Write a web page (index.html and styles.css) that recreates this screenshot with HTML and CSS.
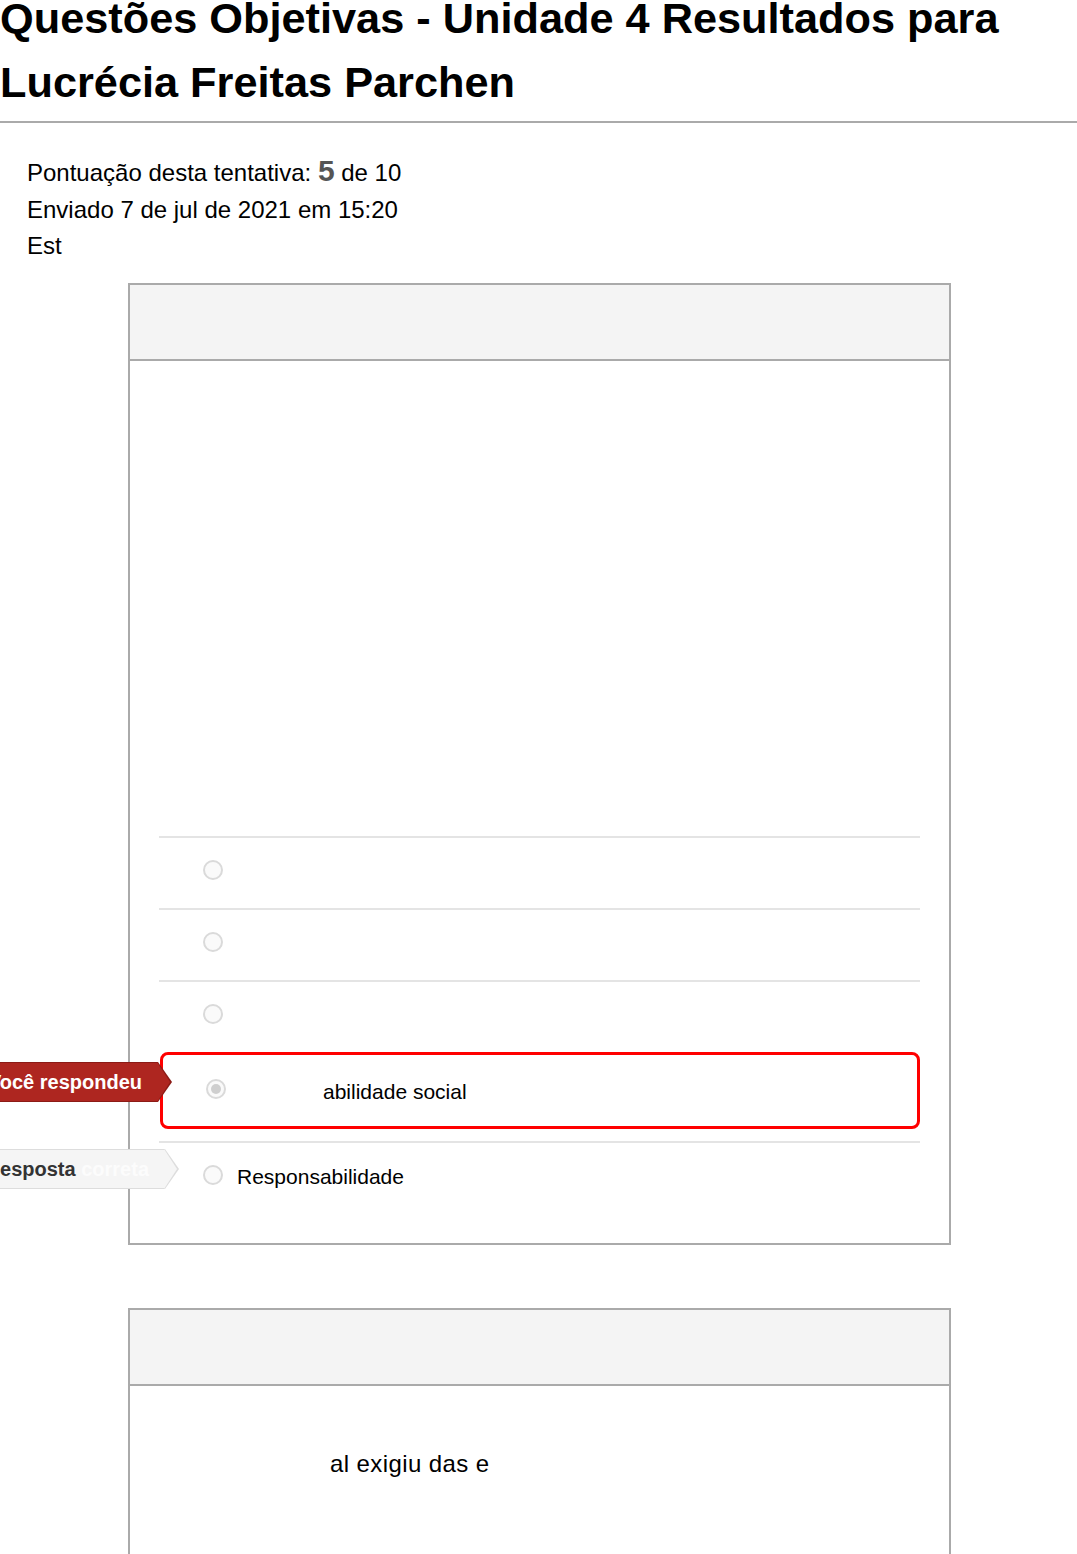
FILE: index.html
```html
<!DOCTYPE html>
<html lang="pt-BR">
<head>
    <meta charset="UTF-8">
    <meta name="viewport" content="width=device-width, initial-scale=1.0">
    <title>Questões Objetivas - Unidade 4 Resultados</title>
    <link rel="stylesheet" href="styles.css">
</head>
<body>

    <h1 class="page-title">Questões Objetivas - Unidade 4 Resultados para Lucrécia Freitas Parchen</h1>

    <div class="quiz-info">
        <div class="info-line score-line">Pontuação desta tentativa: <span class="score">5</span> de 10</div>
        <div class="info-line">Enviado 7 de jul de 2021 em 15:20</div>
        <div class="info-line">Est</div>
    </div>

    <div class="question-card">
        <div class="card-header"></div>
        <div class="card-body">
            <div class="question-text"></div>
            <div class="answers">
                <div class="answer">
                    <span class="radio"></span>
                </div>
                <div class="answer">
                    <span class="radio"></span>
                </div>
                <div class="answer">
                    <span class="radio"></span>
                </div>
                <div class="answer selected">
                    <span class="tag tag-you">Você respondeu</span>
                    <span class="radio checked"></span>
                    <span class="answer-text shifted">abilidade social</span>
                </div>
                <div class="answer last">
                    <span class="tag tag-correct">Resposta <span class="faint">correta</span></span>
                    <span class="radio"></span>
                    <span class="answer-text">Responsabilidade</span>
                </div>
            </div>
        </div>
    </div>

    <div class="question-card next-card">
        <div class="card-header"></div>
        <div class="card-body">
            <p class="question-para">al exigiu das e</p>
        </div>
    </div>

</body>
</html>
```

FILE: styles.css
```css
/* General */
body {
    margin: 0;
    font-family: "Liberation Sans", Arial, sans-serif;
    color: #000;
    background: #fff;
    overflow-x: hidden;
}

.page-title {
    margin: -14px 0 0;
    padding: 0 0 7px;
    font-size: 43.3px;
    line-height: 64px;
    font-weight: bold;
    border-bottom: 2px solid #aaaaaa;
}

/* Quiz info */
.quiz-info {
    padding: 28px 0 0 27px;
    font-size: 24px;
}

.info-line {
    line-height: 36px;
}

.score-line {
    line-height: 39px;
}

.score {
    font-size: 30px;
    font-weight: bold;
    color: #555;
}

/* Question cards */
.question-card {
    box-sizing: border-box;
    width: 823px;
    margin: 19px 0 0 128px;
    border: 2px solid #aaaaaa;
}

.next-card {
    margin-top: 63px;
}

.card-header {
    height: 74px;
    background: #f4f4f4;
    border-bottom: 2px solid #aaaaaa;
}

.card-body {
    padding: 0 29px 32px;
}

.question-text {
    height: 475px;
}

.answer {
    position: relative;
    box-sizing: border-box;
    height: 72px;
    padding: 22px 0 0 44px;
    display: flex;
    align-items: flex-start;
    border-top: 2px solid #e4e4e4;
    font-size: 21px;
}

.answer.selected {
    height: 77px;
    margin-left: 1px;
    padding: 24px 0 0 43px;
    border: 3px solid #ff0000;
    border-radius: 8px;
}

.answer.last {
    margin-top: 12px;
    height: 70px;
}

.radio {
    box-sizing: border-box;
    flex: none;
    width: 20px;
    height: 20px;
    border: 2px solid #dadada;
    border-radius: 50%;
    background: #fafafa;
    display: flex;
    align-items: center;
    justify-content: center;
}

.radio.checked::after {
    content: "";
    width: 10px;
    height: 10px;
    border-radius: 50%;
    background: #cfcfcf;
}

.answer-text {
    margin-left: 14px;
    line-height: 24px;
}

.answer-text.shifted {
    margin-left: 97px;
    margin-top: 1px;
}

/* Answer tags */
.tag {
    position: absolute;
    box-sizing: border-box;
    height: 40px;
    padding-right: 15px;
    font-size: 20px;
    font-weight: bold;
    line-height: 38px;
    text-align: right;
    white-space: nowrap;
}

.tag::before,
.tag::after {
    content: "";
    position: absolute;
    top: -1px;
    width: 0;
    height: 0;
    border-top: 20px solid transparent;
    border-bottom: 20px solid transparent;
}

.tag::before {
    right: -15px;
    border-left: 14px solid;
}

.tag::after {
    right: -13px;
    border-left: 13px solid;
}

.tag-you {
    top: 7px;
    right: calc(100% + 5px);
    width: 180px;
    background: #ae2620;
    border: 1px solid #8c1b16;
    color: #fff;
}

.tag-you::before {
    border-left-color: #8c1b16;
}

.tag-you::after {
    border-left-color: #ae2620;
}

.tag-correct {
    top: 6px;
    right: calc(100% - 6px);
    width: 190px;
    background: #f5f5f5;
    border: 1px solid #dddddd;
    color: #333;
}

.tag-correct::before {
    border-left-color: #dddddd;
}

.tag-correct::after {
    border-left-color: #f5f5f5;
}

.faint {
    color: #fcfcfc;
}

.question-para {
    margin: 0;
    padding: 60px 0 0 171px;
    min-height: 240px;
    font-size: 24px;
    line-height: 36px;
    letter-spacing: 0.4px;
}
```
